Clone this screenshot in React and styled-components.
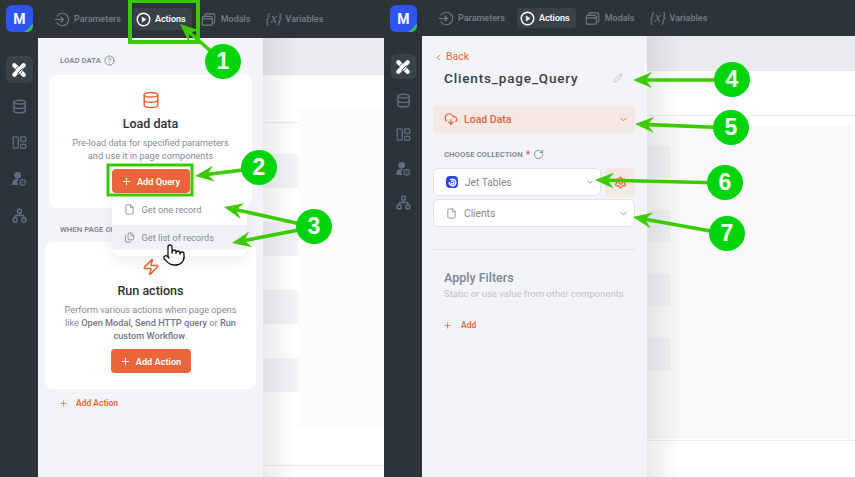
import React from 'react';
import styled, { createGlobalStyle } from 'styled-components';
import {
  ChevronDown, ChevronLeft, CircleHelp, CloudDownload, Database, File, Files,
  Network, Pencil, Plus, Pointer, RotateCw, Settings, Zap,
} from 'lucide-react';

const orange = '#ea6539';
const font = 'Roboto, "Noto Sans", sans-serif';

const GlobalStyle = createGlobalStyle`
  html, body { margin: 0; padding: 0; background: #fff; }
  body { font-family: ${font}; overflow: hidden; }
  * { box-sizing: border-box; }
`;

const Page = styled.div`
  position: relative;
  display: flex;
  width: 855px;
  height: 477px;
  overflow: hidden;
`;

const Screen = styled.div`
  display: flex;
  flex-direction: column;
  flex: none;
  width: ${({ $width }) => $width}px;
  height: 100%;
`;

const TopBar = styled.header`
  display: flex;
  align-items: flex-start;
  flex: none;
  height: ${({ $height }) => $height}px;
  padding: 5px 0 0 6px;
  background: #2c333a;
`;

const Logo = styled.div`
  position: relative;
  display: flex;
  align-items: center;
  justify-content: center;
  width: 27px;
  height: 27px;
  border-radius: 6px;
  background: #2f55f0;
  color: #fff;
  font-size: 14px;
  font-weight: 700;
  overflow: hidden;
  &::after {
    content: '';
    position: absolute;
    right: -6px;
    bottom: -6px;
    width: 12px;
    height: 12px;
    background: #2fb56b;
    transform: rotate(45deg);
  }
`;

const Nav = styled.nav`
  display: flex;
  align-items: center;
  gap: 6px;
  margin: 3px 0 0 18px;
`;

const Tab = styled.div`
  display: flex;
  align-items: center;
  gap: ${({ $active }) => ($active ? 4 : 5)}px;
  height: ${({ $tall }) => ($tall ? 22 : 20)}px;
  padding: 0 6px 0 3px;
  border-radius: 4px;
  background: ${({ $active }) => ($active ? '#3a4148' : 'transparent')};
  color: ${({ $active }) => ($active ? '#fff' : '#6f7a85')};
  font-size: 9px;
  font-weight: 600;
  white-space: nowrap;
`;

const VarGlyph = styled.span`
  width: 15px;
  font-family: "Liberation Serif", serif;
  font-size: 14px;
  font-style: italic;
  font-weight: 400;
  text-align: center;
  letter-spacing: -0.5px;
`;

const Body = styled.div`
  display: flex;
  flex: 1;
  min-height: 0;
`;

const Rail = styled.aside`
  display: flex;
  flex-direction: column;
  align-items: center;
  flex: none;
  width: 38px;
  padding-top: 18px;
  gap: ${({ $gap }) => $gap}px;
  background: #2c333a;
`;

const RailItem = styled.div`
  display: flex;
  align-items: center;
  justify-content: center;
  width: ${({ $size }) => $size}px;
  height: ${({ $size }) => $size}px;
  border-radius: 5px;
  background: ${({ $active }) => ($active ? '#3a4148' : 'transparent')};
  color: ${({ $active }) => ($active ? '#fff' : '#5d6f83')};
`;

const Panel = styled.section`
  display: flex;
  flex-direction: column;
  flex: none;
  width: 225px;
  border-top-left-radius: 5px;
  background: #f3f4f8;
`;

const SectionLabel = styled.div`
  display: flex;
  align-items: center;
  gap: 3px;
  height: 12px;
  margin: ${({ $top }) => $top}px 0 0 22px;
  color: #7d8794;
  font-size: 7.8px;
  font-weight: 600;
  white-space: nowrap;
  svg { color: #7d8794; }
`;

const Card = styled.div`
  display: flex;
  flex-direction: column;
  align-items: center;
  height: ${({ $height }) => $height}px;
  margin: ${({ $top }) => $top}px ${({ $inset }) => $inset}px 0;
  padding-top: 16px;
  border-radius: 8px;
  background: #fff;
  color: ${orange};
`;

const CardTitle = styled.h3`
  margin: 7px 0 0;
  color: #2b3038;
  font-size: 12.5px;
  font-weight: 500;
  line-height: 16px;
`;

const CardText = styled.p`
  margin: 4px 0 0;
  color: #838d9c;
  font-size: 9.2px;
  line-height: 13px;
  text-align: center;
  white-space: nowrap;
  b { font-weight: 500; color: #6e7887; }
`;

const ButtonWrap = styled.div`
  position: relative;
  margin-top: 7px;
`;

const OrangeButton = styled.div`
  display: flex;
  align-items: center;
  justify-content: center;
  gap: 5px;
  width: ${({ $width }) => $width}px;
  height: 24px;
  border-radius: 4px;
  background: ${orange};
  color: #fff;
  font-size: 9.2px;
  font-weight: 600;
  white-space: nowrap;
`;

const Dropdown = styled.div`
  position: absolute;
  top: 100%;
  left: 0;
  z-index: 2;
  width: 135px;
  height: 63px;
  border-radius: 8px;
  background: #fff;
  box-shadow: 0 6px 14px rgba(40, 50, 70, 0.08);
  overflow: hidden;
`;

const DropdownRow = styled.div`
  display: flex;
  align-items: center;
  gap: 7px;
  height: ${({ $height }) => $height}px;
  padding-left: 12px;
  background: ${({ $hover }) => ($hover ? '#f0f1f5' : '#fff')};
  color: #858e9b;
  font-size: 9.2px;
  white-space: nowrap;
`;

const HandCursor = styled(Pointer)`
  position: absolute;
  top: 74px;
  left: 50px;
  z-index: 3;
  color: #111;
  fill: #fff;
`;

const AddLink = styled.div`
  display: flex;
  align-items: center;
  gap: ${({ $gap }) => $gap}px;
  height: 12px;
  margin: ${({ $top }) => $top}px 0 0 ${({ $left }) => $left}px;
  color: ${orange};
  font-size: 8.5px;
  font-weight: 600;
  white-space: nowrap;
`;

const BackLink = styled.div`
  display: flex;
  align-items: center;
  gap: 3px;
  height: 14px;
  margin: 14px 0 0 12px;
  color: ${orange};
  font-size: 10.5px;
  line-height: 14px;
`;

// its own background hides the foot of the Back link, as in the app
const TitleRow = styled.div`
  position: relative;
  display: flex;
  align-items: center;
  justify-content: space-between;
  height: 25px;
  margin: -2px 24px 0 22px;
  padding-top: 7px;
  background: #f3f4f8;
  color: #3a3f47;
  font-size: 13.5px;
  font-weight: 500;
  letter-spacing: 0.85px;
  svg { color: #b9c0cb; }
`;

const LoadRow = styled.div`
  display: flex;
  align-items: center;
  height: 28px;
  margin: 18px 12px 0 11px;
  padding: 0 6px 0 11px;
  gap: 6px;
  border-radius: 5px;
  background: #f5e8e4;
  color: ${orange};
  font-size: 10.5px;
  font-weight: 500;
  span { flex: 1; }
`;

const SelectRow = styled.div`
  display: flex;
  gap: 4px;
  margin: ${({ $top }) => $top}px 12px 0 11px;
`;

const Select = styled.div`
  display: flex;
  align-items: center;
  flex: 1;
  gap: 7px;
  height: 28px;
  padding: 0 5px 0 12px;
  border: 1px solid #dfe3ea;
  border-radius: 5px;
  background: #fff;
  color: #7d8794;
  font-size: 10.2px;
  span { flex: 1; }
  svg { flex: none; color: #8b94a1; }
`;

const CollectionDot = styled.div`
  display: flex;
  align-items: center;
  justify-content: center;
  width: 12px;
  height: 12px;
  border-radius: 4px;
  background: #2746e6;
  color: #fff;
  svg { color: #fff; }
`;

const GearTile = styled.div`
  display: flex;
  align-items: center;
  justify-content: center;
  flex: none;
  width: 30px;
  height: 29px;
  border-radius: 5px;
  background: #f5e8e4;
  color: ${orange};
`;

const Star = styled.span`
  color: ${orange};
  font-size: 10px;
`;

const Divider = styled.hr`
  width: 202px;
  height: 1px;
  margin: 22px 0 0 11px;
  border: 0;
  background: #dfe2e8;
`;

const FilterTitle = styled.h4`
  margin: 20px 0 0 22px;
  color: #7b8696;
  font-size: 12.5px;
  font-weight: 500;
  line-height: 16px;
`;

const FilterText = styled.p`
  margin: 2px 0 0 22px;
  color: #bcc3ce;
  font-size: 9.5px;
  line-height: 12px;
  white-space: nowrap;
`;

const Main = styled.main`
  position: relative;
  display: flex;
  flex-direction: column;
  flex: 1;
  min-width: 0;
  background: #fff;
  &::after {
    content: '';
    position: absolute;
    inset: 0 auto 0 0;
    width: 34px;
    background: linear-gradient(to right, rgba(30, 40, 50, 0.09), rgba(30, 40, 50, 0));
  }
`;

const MainHeader = styled.div`
  flex: none;
  height: ${({ $height }) => $height}px;
  background: #e9ebef;
`;

const Rule = styled.div`
  flex: none;
  height: 1px;
  margin-top: ${({ $top }) => $top}px;
  background: #e9e9f0;
`;

const Sheet = styled.div`
  display: flex;
  flex: none;
  height: ${({ $height }) => $height}px;
  margin-top: ${({ $top }) => $top}px;
`;

const Gutter = styled.div`
  display: flex;
  flex-direction: column;
  flex: none;
  width: ${({ $width }) => $width}px;
  padding-top: ${({ $pad }) => $pad}px;
  background: ${({ $bg }) => $bg};
`;

const GhostRow = styled.div`
  flex: none;
  height: ${({ $height }) => $height}px;
  margin-top: ${({ $top }) => $top}px;
  background: ${({ $bg }) => $bg};
`;

const Canvas = styled.div`
  flex: ${({ $fill }) => ($fill ? 1 : 'none')};
  width: ${({ $fill, $width }) => ($fill ? 'auto' : `${$width}px`)};
  height: ${({ $height }) => $height}px;
  margin-top: ${({ $top }) => $top}px;
  background: ${({ $bg }) => $bg};
`;

const Overlay = styled.svg`
  position: absolute;
  inset: 0;
  z-index: 5;
  pointer-events: none;
`;

const Badge = styled.div`
  position: absolute;
  top: ${({ $y }) => $y - 18}px;
  left: ${({ $x }) => $x - 18}px;
  z-index: 6;
  display: flex;
  align-items: center;
  justify-content: center;
  width: 36px;
  height: 35px;
  border-radius: 50%;
  background: #00d40d;
  color: #fff;
  font-family: "Liberation Sans", sans-serif;
  font-size: 23px;
  font-weight: 700;
`;

// points of a shaft with a swept-back head, from start to tip
const arrowPoints = ([x1, y1], [x2, y2]) => {
  const len = Math.hypot(x2 - x1, y2 - y1);
  const ux = (x2 - x1) / len;
  const uy = (y2 - y1) / len;
  const at = (back, side) => `${x2 - ux * back - uy * side},${y2 - uy * back + ux * side}`;
  return [
    at(len, 1.8), at(14, 1.8), at(19, 8), at(0, 0), at(19, -8), at(14, -1.8), at(len, -1.8),
  ].join(' ');
};

const arrows = [
  [[223, 62], [180, 24]],
  [[259, 168], [195, 176]],
  [[314, 227], [224, 207]],
  [[314, 227], [232, 243]],
  [[732, 80], [633, 80]],
  [[732, 128], [635, 124]],
  [[725, 183], [595, 180]],
  [[727, 234], [633, 217]],
];

const badges = [
  [223, 62, 1], [259, 168, 2], [314, 227, 3], [732, 80, 4],
  [731, 128, 5], [725, 183, 6], [727, 234, 7],
];

function Annotations() {
  return (
    <>
      <Overlay width="855" height="477">
        <rect x="130" y="1" width="68" height="41" fill="none" stroke="#3cc800" strokeWidth="4" />
        <rect x="108" y="165" width="84" height="30" fill="none" stroke="#3cc800" strokeWidth="3" />
        {arrows.map(([from, to]) => (
          <polygon key={`${to[0]}-${to[1]}`} points={arrowPoints(from, to)} fill="#3ccb00" />
        ))}
      </Overlay>
      {badges.map(([x, y, n]) => <Badge key={n} $x={x} $y={y}>{n}</Badge>)}
    </>
  );
}

function ParamsIcon() {
  return (
    <svg width="15" height="15" viewBox="0 0 24 24" fill="none" stroke="currentColor" strokeWidth="1.8" strokeLinecap="round" strokeLinejoin="round">
      <path d="M5 6.5a10 10 0 1 1 0 11" />
      <path d="M2 12h13M11 8l4 4-4 4" />
    </svg>
  );
}

function ModalsIcon() {
  return (
    <svg width="15" height="15" viewBox="0 0 24 24" fill="none" stroke="currentColor" strokeWidth="1.8">
      <rect x="2" y="7" width="16" height="14" rx="2" />
      <path d="M2 11h16M6 7V5a2 2 0 0 1 2-2h12a2 2 0 0 1 2 2v11a2 2 0 0 1-2 2h-2" />
    </svg>
  );
}

function PlayRingIcon() {
  return (
    <svg width="15" height="15" viewBox="0 0 24 24" fill="none" stroke="currentColor" strokeWidth="2.4">
      <circle cx="12" cy="12" r="10" />
      <path d="M10 8l6 4-6 4z" fill="currentColor" strokeWidth="1" strokeLinejoin="round" />
    </svg>
  );
}

function LayoutIcon() {
  return (
    <svg width="15" height="15" viewBox="0 0 24 24" fill="none" stroke="currentColor" strokeWidth="2">
      <rect x="2" y="3" width="8" height="18" rx="1" />
      <rect x="14" y="3" width="8" height="7" rx="1" />
      <rect x="14" y="15" width="8" height="6" rx="1" />
    </svg>
  );
}

function UserGearIcon() {
  return (
    <svg width="16" height="16" viewBox="0 0 24 24" fill="currentColor">
      <circle cx="10" cy="6.5" r="5" />
      <path d="M2 21v-3a7 7 0 0 1 7-6h3a6 6 0 0 0-1 9z" />
      <circle cx="17.5" cy="17" r="4.2" fill="none" stroke="currentColor" strokeWidth="1.8" />
      <circle cx="17.5" cy="17" r="1.2" />
    </svg>
  );
}

function DesignIcon() {
  return (
    <svg width="16" height="16" viewBox="0 0 24 24" fill="none" strokeLinecap="round">
      <path d="M5 5l14 14M19 5L5 19" stroke="#fff" strokeWidth="6.5" />
      <path d="M7 10l2.5-2.5M14.5 16.5l2.5-2.5M10 17l7-7" stroke="#3a4148" strokeWidth="1.5" />
    </svg>
  );
}

function SpiralIcon() {
  return (
    <svg width="9" height="9" viewBox="0 0 24 24" fill="none" stroke="currentColor" strokeWidth="3.5" strokeLinecap="round">
      <path d="M3 12a9 9 0 1 0 4-7.5" />
      <path d="M8 13a4 4 0 1 0 2-4.5" />
    </svg>
  );
}

function TopNav({ variant }) {
  const tall = variant === 'left';
  return (
    <TopBar $height={tall ? 38 : 36}>
      <Logo>M</Logo>
      <Nav>
        <Tab><ParamsIcon />Parameters</Tab>
        <Tab $active $tall={tall}><PlayRingIcon />Actions</Tab>
        <Tab><ModalsIcon />Modals</Tab>
        <Tab><VarGlyph>{'{x}'}</VarGlyph>Variables</Tab>
      </Nav>
    </TopBar>
  );
}

function SideRail({ size, gap }) {
  return (
    <Rail $gap={gap}>
      <RailItem $active $size={size}><DesignIcon /></RailItem>
      <RailItem $size={size}><Database size={15} strokeWidth={2.2} /></RailItem>
      <RailItem $size={size}><LayoutIcon /></RailItem>
      <RailItem $size={size}><UserGearIcon /></RailItem>
      <RailItem $size={size}><Network size={15} strokeWidth={2.2} /></RailItem>
    </Rail>
  );
}

function LoadPanel() {
  return (
    <Panel>
      <SectionLabel $top={16}>LOAD DATA <CircleHelp size={11} /></SectionLabel>
      <Card $top={9} $inset={11} $height={133}>
        <Database size={18} />
        <CardTitle>Load data</CardTitle>
        <CardText>Pre-load data for specified parameters<br />and use it in page components</CardText>
        <ButtonWrap>
          <OrangeButton $width={78}><Plus size={11} strokeWidth={2.2} />Add Query</OrangeButton>
          <Dropdown>
            <DropdownRow $height={32}><File size={11} />Get one record</DropdownRow>
            <DropdownRow $height={25} $hover><Files size={11} />Get list of records</DropdownRow>
          </Dropdown>
          <HandCursor size={24} strokeWidth={1.3} />
        </ButtonWrap>
      </Card>
      <SectionLabel $top={15}>WHEN PAGE OPENS</SectionLabel>
      <Card $top={7} $inset={7} $height={147}>
        <Zap size={18} />
        <CardTitle>Run actions</CardTitle>
        <CardText>
          Perform various actions when page opens<br />
          like <b>Open Modal, Send HTTP query</b> or <b>Run</b><br />
          <b>custom Workflow</b>.
        </CardText>
        <ButtonWrap>
          <OrangeButton $width={80}><Plus size={11} strokeWidth={2.2} />Add Action</OrangeButton>
        </ButtonWrap>
      </Card>
      <AddLink $top={8} $left={21} $gap={8}><Plus size={9} />Add Action</AddLink>
    </Panel>
  );
}

function QueryPanel() {
  return (
    <Panel>
      <BackLink><ChevronLeft size={9} strokeWidth={2.4} />Back</BackLink>
      <TitleRow>Clients_page_Query<Pencil size={10} /></TitleRow>
      <LoadRow><CloudDownload size={14} /><span>Load Data</span><ChevronDown size={11} /></LoadRow>
      <SectionLabel $top={15}>CHOOSE COLLECTION <Star>*</Star> <RotateCw size={11} /></SectionLabel>
      <SelectRow $top={8}>
        <Select>
          <CollectionDot><SpiralIcon /></CollectionDot>
          <span>Jet Tables</span>
          <ChevronDown size={10} />
        </Select>
        <GearTile><Settings size={13} strokeWidth={2.4} /></GearTile>
      </SelectRow>
      <SelectRow $top={2}>
        <Select>
          <File size={11} />
          <span>Clients</span>
          <ChevronDown size={11} />
        </Select>
      </SelectRow>
      <Divider />
      <FilterTitle>Apply Filters</FilterTitle>
      <FilterText>Static or use value from other components</FilterText>
      <AddLink $top={19} $left={21} $gap={9}><Plus size={9} />Add</AddLink>
    </Panel>
  );
}

function LeftPreview() {
  return (
    <Main>
      <MainHeader $height={37} />
      <Sheet $top={0} $height={390}>
        <Gutter $width={35} $pad={47} $bg="#fff">
          <Rule $top={0} />
          <GhostRow $top={31} $height={34} $bg="#f2f3f5" />
          <GhostRow $top={34} $height={34} $bg="#f2f3f5" />
          <GhostRow $top={34} $height={34} $bg="#f2f3f5" />
          <GhostRow $top={34} $height={34} $bg="#f2f3f5" />
        </Gutter>
        <Canvas $fill $top={34} $height={318} $bg="#fcfcfc" />
      </Sheet>
      <Rule $top={0} />
    </Main>
  );
}

function RightPreview() {
  return (
    <Main>
      <MainHeader $height={35} />
      <Rule $top={44} />
      <Sheet $top={10} $height={313}>
        <Gutter $width={24} $pad={20} $bg="#f8f8f8">
          <GhostRow $top={0} $height={32} $bg="#eff0f2" />
          <GhostRow $top={32} $height={32} $bg="#eff0f2" />
          <GhostRow $top={32} $height={32} $bg="#eff0f2" />
          <GhostRow $top={32} $height={33} $bg="#eff0f2" />
        </Gutter>
        <Canvas $width={181} $top={0} $height={313} $bg="#f8f8f8" />
      </Sheet>
      <Rule $top={1} />
    </Main>
  );
}

export default function App() {
  return (
    <Page>
      <GlobalStyle />
      <Screen $width={384}>
        <TopNav variant="left" />
        <Body>
          <SideRail size={27} gap={9.5} />
          <LoadPanel />
          <LeftPreview />
        </Body>
      </Screen>
      <Screen $width={471}>
        <TopNav variant="right" />
        <Body>
          <SideRail size={25} gap={9} />
          <QueryPanel />
          <RightPreview />
        </Body>
      </Screen>
      <Annotations />
    </Page>
  );
}
